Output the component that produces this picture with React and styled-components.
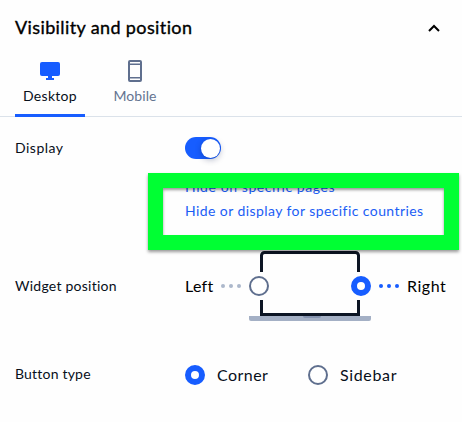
import React, { useState } from 'react';
import styled, { createGlobalStyle } from 'styled-components';

const GlobalStyle = createGlobalStyle`
  * {
    box-sizing: border-box;
  }
  body {
    margin: 0;
    background: #fff;
    color: #080f1a;
    font-family: Lato, 'Open Sans', sans-serif;
  }
`;

const Panel = styled.div`
  width: 462px;
  height: 422px;
  overflow: hidden;
  background: #fefefe;
`;

const Header = styled.header`
  display: flex;
  align-items: center;
  justify-content: space-between;
  height: 56px;
  padding: 0 21px 0 15px;
`;

const Title = styled.h2`
  margin: 0;
  padding-bottom: 2px;
  font-size: 18px;
  font-weight: 400;
  line-height: 24px;
  letter-spacing: 0.38px;
  white-space: nowrap;
  color: #000;
  -webkit-text-stroke: 0.35px #000;
`;

const Tabs = styled.nav`
  display: flex;
  gap: 20px;
  height: 61px;
  padding-left: 15px;
  border-bottom: 1px solid #dbe2ea;
`;

const Tab = styled.button`
  display: flex;
  flex-direction: column;
  align-items: center;
  width: ${props => props.$width}px;
  height: 61px;
  padding: 4px 0 0;
  border: 0;
  border-bottom: 3px solid ${props => (props.$active ? '#175dff' : 'transparent')};
  background: none;
  color: ${props => (props.$active ? '#080f1a' : '#647491')};
  font: inherit;
  font-size: 14px;
  line-height: 20px;
  letter-spacing: ${props => props.$spacing}px;
  svg {
    flex: none;
    margin-bottom: 4px;
  }
`;

const Row = styled.div`
  display: flex;
  align-items: center;
  height: ${props => props.$height}px;
  padding-left: 15px;
`;

const Label = styled.span`
  width: 170px;
  padding-bottom: ${props => props.$lift || 0}px;
  font-size: 14px;
  line-height: 20px;
  letter-spacing: ${props => props.$spacing}px;
`;

const Switch = styled.button`
  display: flex;
  align-items: center;
  justify-content: ${props => (props.$on ? 'flex-end' : 'flex-start')};
  width: 36px;
  height: 22px;
  padding: 0 1px;
  border: 0;
  border-radius: 11px;
  background: ${props => (props.$on ? '#175dff' : '#acb8cb')};
`;

const Knob = styled.span`
  width: 19px;
  height: 19px;
  border-radius: 50%;
  background: #fff;
  box-shadow: 0 2px 6px rgba(0, 20, 70, 0.3);
`;

const Links = styled.div`
  position: relative;
  display: flex;
  flex-direction: column;
  height: 58px;
  margin-top: -4px;
  margin-bottom: 4px;
  padding: 0 0 0 185px;
`;

const Link = styled.a`
  height: 24px;
  color: #1b5df5;
  font-size: 14px;
  line-height: 24px;
  letter-spacing: ${props => props.$spacing}px;
  white-space: nowrap;
`;

const Highlight = styled.div`
  position: absolute;
  top: -2px;
  left: 148px;
  width: 311px;
  height: 77px;
  border: 15px solid #00ff33;
  box-shadow: 0 2px 3px rgba(0, 0, 0, 0.4), inset 0 2px 3px rgba(0, 0, 0, 0.4);
`;

const Choice = styled.span`
  flex: none;
  width: ${props => (props.$width ? `${props.$width}px` : 'auto')};
  font-size: 16px;
  line-height: 24px;
  letter-spacing: ${props => props.$spacing}px;
  white-space: nowrap;
  color: ${props => props.$color || '#080f1a'};
`;

const Radio = styled.span`
  flex: none;
  width: 20px;
  height: 20px;
  border: ${props => (props.$checked ? '6px solid #175dff' : '2px solid #5f6f8e')};
  border-radius: 50%;
  background: #fff;
`;

const RadioOption = styled.label`
  display: flex;
  align-items: center;
  gap: 12px;
  width: ${props => props.$width}px;
`;

const Picker = styled.div`
  display: flex;
  align-items: center;
`;

const DesktopIcon = () => (
  <svg width="20" height="22" viewBox="0 0 20 22" fill="#175dff">
    <rect y="2" width="20" height="14" rx="2" />
    <path d="M8 15h4v3h2v2H6v-2h2z" />
  </svg>
);

const MobileIcon = () => (
  <svg width="14" height="22" viewBox="0 0 14 22" fill="none" stroke="#5f6f8e">
    <rect x="1" y="1" width="12" height="20" rx="1" strokeWidth="2" />
    <path d="M1 4.2h12M1 17.8h12" strokeWidth="1.6" />
  </svg>
);

const Chevron = () => (
  <svg width="13" height="9" viewBox="0 0 13 9" fill="none">
    <path d="M1 7 6 2l5 5" stroke="#000" strokeWidth="2" />
  </svg>
);

const Laptop = ({ side }) => {
  const left = side === 'left';
  const dots = on => (on ? '#175dff' : '#acb8cb');
  const radio = (cx, on) => (
    <circle
      cx={cx}
      cy="35"
      r={on ? 7 : 9}
      fill="#fff"
      stroke={on ? '#175dff' : '#5f6f8e'}
      strokeWidth={on ? 6 : 2}
    />
  );
  return (
    <svg width="187" height="70" viewBox="0 0 187 70" fill="none">
      <path d="M41.5 21V4.5a3 3 0 0 1 3-3h91a3 3 0 0 1 3 3V21" stroke="#0c1524" strokeWidth="3" />
      <path d="M41.5 49v14.5h97V49" stroke="#0c1524" strokeWidth="3" />
      <path d="M29 65h122v3a2 2 0 0 1-2 2H31a2 2 0 0 1-2-2z" fill="#a4b0c5" />
      <path d="M83 65h18a2 2 0 0 1-2 2H85a2 2 0 0 1-2-2z" fill="#8492ae" />
      {[3, 11, 19].map(x => <circle key={x} cx={x} cy="35" r="2" fill={dots(left)} />)}
      {[161, 169, 177].map(x => <circle key={x} cx={x} cy="35" r="2" fill={dots(!left)} />)}
      {radio(39, left)}
      {radio(141, !left)}
    </svg>
  );
};

const App = () => {
  const [tab, setTab] = useState('desktop');
  const [display, setDisplay] = useState(true);
  const [type, setType] = useState('corner');

  return (
    <Panel>
      <GlobalStyle />
      <Header>
        <Title>Visibility and position</Title>
        <Chevron />
      </Header>
      <Tabs>
        <Tab $width={70} $spacing={0.3} $active={tab === 'desktop'} onClick={() => setTab('desktop')}>
          <DesktopIcon />
          Desktop
        </Tab>
        <Tab $width={60} $spacing={0.1} $active={tab === 'mobile'} onClick={() => setTab('mobile')}>
          <MobileIcon />
          Mobile
        </Tab>
      </Tabs>
      <Row $height={62}>
        <Label $spacing={0.5}>Display</Label>
        <Switch $on={display} onClick={() => setDisplay(!display)}>
          <Knob />
        </Switch>
      </Row>
      <Links>
        <Link $spacing={0.58}>Hide on specific pages</Link>
        <Link $spacing={0.42}>Hide or display for specific countries</Link>
        <Highlight />
      </Links>
      <Row $height={98}>
        <Label $spacing={0.25}>Widget position</Label>
        <Picker>
          <Choice $width={35} $spacing={0.3} $color="#000">Left</Choice>
          <Laptop side="right" />
          <Choice $spacing={0.55} $color="#000">Right</Choice>
        </Picker>
      </Row>
      <Row $height={80}>
        <Label $spacing={0.2} $lift={2}>Button type</Label>
        <RadioOption $width={123} onClick={() => setType('corner')}>
          <Radio $checked={type === 'corner'} />
          <Choice $spacing={0.45}>Corner</Choice>
        </RadioOption>
        <RadioOption $width={120} onClick={() => setType('sidebar')}>
          <Radio $checked={type === 'sidebar'} />
          <Choice $spacing={0.65}>Sidebar</Choice>
        </RadioOption>
      </Row>
    </Panel>
  );
};

export default App;
